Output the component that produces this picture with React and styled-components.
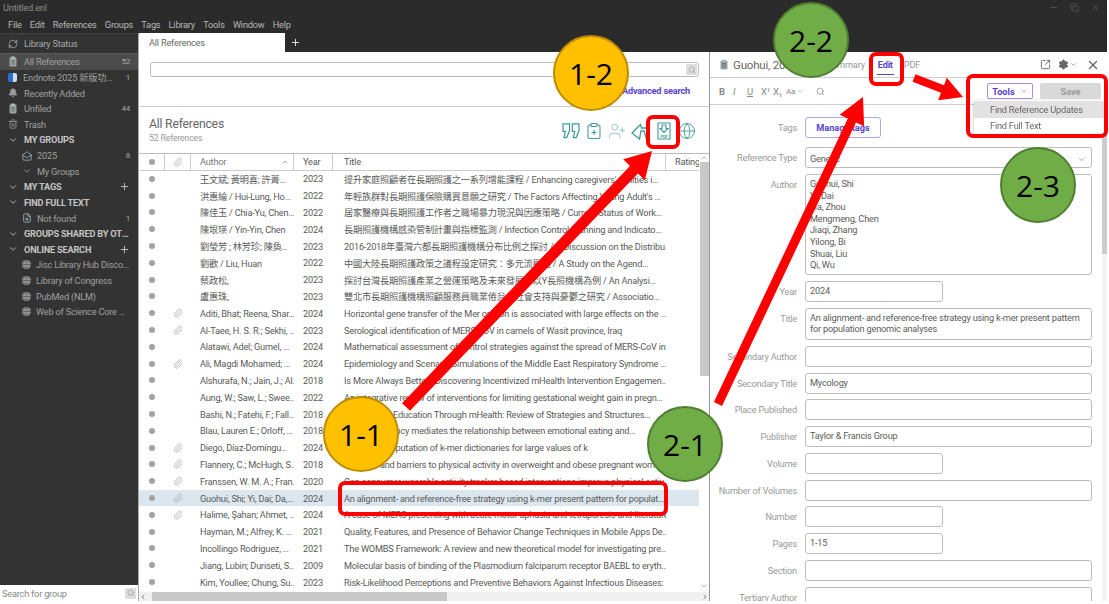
import React from 'react'
import styled, { createGlobalStyle } from 'styled-components'
import {
  Bell, ChevronDown, ChevronLeft, ChevronRight, ChevronUp, ClipboardPlus, Copy, FileSearch,
  Globe, MailOpen, Minus, Paperclip, Plus, RefreshCw, Search, Settings, SquareArrowOutUpRight,
  Trash2, UserPlus, X,
} from 'lucide-react'

const FONT = 'Roboto, "Noto Sans CJK TC", sans-serif'
const PURPLE = '#5a3fd0'
const TEAL = '#3f9a9c'

const GlobalStyle = createGlobalStyle`
  html, body { margin: 0; background: #fff; }
  body { font-family: ${FONT}; font-size: 9.2px; letter-spacing: -0.2px; color: #555; overflow: hidden; }
  * { box-sizing: border-box; }
`

const Page = styled.div`
  position: relative;
  width: 1109px;
  height: 604px;
  overflow: hidden;
`
const Window = styled.div`
  display: flex;
  flex-direction: column;
  width: 1107px;
  height: 601px;
  background: #2b2b2b;
  filter: blur(0.35px);
`
const TitleBar = styled.div`
  display: flex;
  align-items: center;
  justify-content: space-between;
  height: 15px;
  padding: 0 4px 0 3px;
  color: #8c8c8c;
`
const WindowControls = styled.div`
  display: flex;
  gap: 12px;
  padding-right: 3px;
  color: #5e5e5e;
`
const MenuBar = styled.div`
  display: flex;
  gap: 8.2px;
  height: 18px;
  padding: 1px 0 0 8px;
  align-items: center;
  color: #b8b8b8;
`
const Body = styled.div`
  display: flex;
  flex: 1;
  min-height: 0;
`

/* sidebar */
const SidebarBox = styled.aside`
  display: flex;
  flex-direction: column;
  width: 139px;
  background: #333;
  border-right: 1px solid #aaa;
  border-top: 1px solid #444;
`
const StatusRow = styled.div`
  display: flex;
  align-items: center;
  gap: 6px;
  height: 20px;
  padding-left: 8px;
  color: #a8a8a8;
  border-bottom: 1px solid #5a5a5a;
`
const SideRow = styled.div`
  display: flex;
  align-items: center;
  height: 15.625px;
  padding: 0 8px 0 ${p => (p.$indent ? 22 : 8)}px;
  gap: ${p => (p.$indent ? 5 : 6)}px;
  color: ${p => (p.$head ? '#c4c4c4' : '#a0a0a0')};
  font-weight: ${p => (p.$head ? 700 : 400)};
  background: ${p => (p.$active ? '#4c4c4c' : 'transparent')};
  white-space: nowrap;
`
const SideLabel = styled.span`
  flex: 1;
  min-width: 0;
  overflow: hidden;
  text-overflow: ellipsis;
`
const SideCount = styled.span`
  font-size: 8px;
  color: #a8a8a8;
`
const WordBadge = styled.span`
  display: inline-block;
  width: 9px;
  height: 9px;
  flex-shrink: 0;
  border-radius: 2px;
  background: linear-gradient(90deg, #2b6fd0 60%, #cfe0f5 60%);
`
const GlobeDot = styled.span`
  display: inline-flex;
  align-items: center;
  justify-content: center;
  width: 9px;
  height: 9px;
  flex-shrink: 0;
  border-radius: 50%;
  background: #a6a6a6;
  color: #555;
`
const SideSpacer = styled.div`
  flex: 1;
`
const GroupSearch = styled.div`
  display: flex;
  align-items: center;
  justify-content: space-between;
  height: 16px;
  padding: 0 2px 0 2px;
  background: #fff;
  color: #888;
`
const SearchButton = styled.span`
  display: inline-flex;
  align-items: center;
  justify-content: center;
  width: 11px;
  height: 11px;
  background: #ddd;
  color: #999;
  border-radius: 1px;
`

/* main */
const Main = styled.div`
  display: flex;
  flex-direction: column;
  flex: 1;
  min-width: 0;
`
const TabBar = styled.div`
  display: flex;
  align-items: stretch;
  height: 19px;
`
const Tab = styled.div`
  width: 146px;
  padding: 4px 0 0 10px;
  background: #fff;
  color: #666;
`
const AddTab = styled.div`
  display: flex;
  align-items: center;
  padding-left: 5px;
  color: #eee;
`
const Panes = styled.div`
  display: flex;
  flex: 1;
  min-height: 0;
  background: #fff;
`
const ListPane = styled.section`
  display: flex;
  flex-direction: column;
  width: 571px;
  border-right: 1.5px solid #999;
`
const SearchArea = styled.div`
  display: flex;
  flex-direction: column;
  height: 55px;
  padding: 10px 10px 0 11px;
  border-bottom: 1px solid #ccc;
`
const SearchInput = styled.div`
  display: flex;
  align-items: center;
  justify-content: flex-end;
  height: 15px;
  padding-right: 1px;
  border: 1px solid #bbb;
  border-radius: 3px;
`
const AdvancedLink = styled.a`
  align-self: flex-end;
  margin: 8px 9px 0 0;
  color: ${PURPLE};
  font-weight: 700;
`
const ListHead = styled.div`
  display: flex;
  justify-content: space-between;
  height: 46px;
  padding: 9px 13px 0 10px;
`
const ListTitle = styled.div`
  font-size: 12.2px;
  line-height: 16px;
  color: #666;
`
const ListCount = styled.div`
  margin-top: 1px;
  font-size: 8.8px;
  color: #999;
`
const ActionIcons = styled.div`
  display: flex;
  align-items: center;
  gap: 5px;
  height: 30px;
  color: ${TEAL};
`
const TableArea = styled.div`
  display: flex;
  flex: 1;
  min-height: 0;
  border-top: 1px solid #bbb;
`
const TableCol = styled.div`
  flex: 1;
  min-width: 0;
  overflow: hidden;
`
const Row = styled.div`
  display: grid;
  grid-template-columns: 26px 26px 103px 39px 333px 33px;
  align-items: center;
  height: ${p => (p.$head ? 16.5 : 16.8)}px;
  background: ${p => (p.$selected ? '#dce6ef' : 'transparent')};
  color: #5a5a5a;
  border-bottom: ${p => (p.$head ? '1px solid #ccc' : '0')};
  white-space: nowrap;
`
const Cell = styled.div`
  display: flex;
  align-items: center;
  justify-content: ${p => (p.$center ? 'center' : 'flex-start')};
  height: 100%;
  padding-left: ${p => (p.$center ? 0 : p.$pad || 9)}px;
  overflow: hidden;
  border-right: ${p => (p.$head ? '1px solid #ccc' : '0')};
`
const AuthorHead = styled(Cell)`
  justify-content: space-between;
  padding-right: 4px;
  color: #777;
`
const Dot = styled.span`
  width: 6px;
  height: 6px;
  border-radius: 50%;
  background: #a3a3a3;
`
const VScroll = styled.div`
  display: flex;
  flex-direction: column;
  align-items: center;
  justify-content: space-between;
  width: 10px;
  padding-bottom: 2px;
  color: #888;
`
const VThumb = styled.div`
  width: 9px;
  height: 214px;
  margin-bottom: auto;
  background: #c8c8c8;
`
const HScroll = styled.div`
  display: flex;
  align-items: center;
  height: 9px;
  background: #f0f0f0;
  color: #555;
`
const HThumb = styled.div`
  width: 295px;
  height: 9px;
  margin: 0 auto 0 5px;
  background: #c8c8c8;
`

/* detail */
const DetailPane = styled.section`
  display: flex;
  flex-direction: column;
  flex: 1;
  min-width: 0;
`
const DetailHead = styled.div`
  display: flex;
  align-items: center;
  height: 26px;
  padding-left: 9px;
  border-bottom: 1px solid #ccc;
`
const RefName = styled.div`
  width: 88px;
  margin-left: 4px;
  font-size: 11.5px;
  color: #666;
  white-space: nowrap;
`
const DetailTab = styled.div`
  position: relative;
  margin-left: ${p => p.$gap}px;
  color: ${p => (p.$active ? PURPLE : '#999')};
  font-weight: ${p => (p.$active ? 700 : 400)};
  &::after {
    content: '';
    display: ${p => (p.$active ? 'block' : 'none')};
    position: absolute;
    left: -1px;
    right: -1px;
    bottom: -5px;
    height: 1.5px;
    background: ${PURPLE};
  }
`
const HeadIcons = styled.div`
  display: flex;
  align-items: center;
  margin-left: auto;
  color: #666;
`
const EditBar = styled.div`
  position: relative;
  display: flex;
  align-items: center;
  height: 27px;
  padding: 0 6px 0 9px;
  border-bottom: 1px solid #ccc;
  color: #888;
`
const Format = styled.span`
  width: ${p => p.$w}px;
  font-weight: ${p => (p.$bold ? 700 : 400)};
  font-style: ${p => (p.$italic ? 'italic' : 'normal')};
  text-decoration: ${p => (p.$under ? 'underline' : 'none')};
  font-size: ${p => p.$size || 9.5}px;
`
const ToolsButton = styled.button`
  display: flex;
  align-items: center;
  justify-content: center;
  gap: 5px;
  width: 46px;
  height: 16px;
  margin-left: auto;
  padding: 0;
  border: 1px solid #a58fe0;
  border-radius: 2px;
  background: #fff;
  color: ${PURPLE};
  font: 700 9.2px ${FONT};
`
const SaveButton = styled.button`
  width: 61px;
  height: 16px;
  margin-left: 7px;
  padding: 0;
  border: 0;
  border-radius: 2px;
  background: #d9d9d9;
  color: #999;
  font: 700 9.2px ${FONT};
`
const ToolsMenu = styled.div`
  position: absolute;
  top: 22px;
  right: 3px;
  width: 130px;
  padding-top: 1px;
  background: #fff;
  box-shadow: 0 1px 3px rgba(0, 0, 0, 0.3);
  color: #666;
`
const MenuItem = styled.div`
  display: flex;
  align-items: center;
  height: 16.5px;
  padding-left: 16px;
  background: ${p => (p.$hover ? '#e2e2e2' : 'transparent')};
`
const FormArea = styled.div`
  display: flex;
  flex: 1;
  min-height: 0;
`
const FormFields = styled.div`
  display: flex;
  flex-direction: column;
  flex: 1;
  min-width: 0;
  gap: 5.75px;
  padding: 12px 10px 0 0;
  overflow: hidden;
`
const Field = styled.div`
  display: flex;
  flex-shrink: 0;
  gap: 8px;
  margin-bottom: ${p => p.$after || 0}px;
`
const FieldLabel = styled.div`
  flex-shrink: 0;
  width: 87px;
  line-height: 21px;
  text-align: right;
  color: #999;
  white-space: nowrap;
`
const FieldBox = styled.div`
  display: flex;
  align-items: ${p => (p.$select ? 'center' : 'flex-start')};
  justify-content: space-between;
  width: ${p => (p.$short ? 137.5 : 287)}px;
  height: ${p => p.$h || 21}px;
  padding: 3px 5px 0 4px;
  border: 1px solid #bdbdbd;
  border-radius: 3px;
  line-height: 11.6px;
  color: #5c5c5c;
  white-space: pre-line;
`
const TagsButton = styled.button`
  width: 76px;
  height: 21px;
  padding: 0;
  border: 1px solid #b7a6e8;
  border-radius: 3px;
  background: #fff;
  color: ${PURPLE};
  font: 700 9.2px ${FONT};
`
const FormScroll = styled.div`
  width: 5px;
  background: #f4f4f4;
`
const FormThumb = styled.div`
  width: 5px;
  height: 120px;
  margin-top: 29px;
  background: #ccc;
`

/* annotations drawn over the screenshot */
const Circle = styled.div`
  position: absolute;
  left: ${p => p.$x - 38}px;
  top: ${p => p.$y - 38}px;
  display: flex;
  align-items: center;
  justify-content: center;
  width: 76px;
  height: 76px;
  border-radius: 50%;
  border: 2.5px solid ${p => (p.$green ? '#507e32' : '#bc8c00')};
  background: ${p => (p.$green ? '#70ad47' : '#ffc000')};
  color: #000;
  font: 400 30px "Open Sans", sans-serif;
  letter-spacing: 0;
`
const Marker = styled.div`
  position: absolute;
  left: ${p => p.$x}px;
  top: ${p => p.$y}px;
  width: ${p => p.$w}px;
  height: ${p => p.$h}px;
  border: 4px solid #f00;
  border-radius: 7px;
`
const ArrowLayer = styled.svg`
  position: absolute;
  left: 0;
  top: 0;
`

function ClipIcon() {
  return (
    <svg width='10' height='11' viewBox='0 0 10 11' style={{ flexShrink: 0 }}>
      <rect x='1.5' y='1.5' width='7' height='9' rx='1' fill='#9aa5a5' />
      <rect x='3' y='0.5' width='4' height='2' rx='.5' fill='#b5bdbd' />
      <path d='M3 4.5h4M3 6.2h4M3 8h4' stroke='#555' strokeWidth='.6' />
    </svg>
  )
}

function QuoteIcon() {
  return (
    <svg width='18' height='16' viewBox='0 0 19 17' fill='none' stroke='currentColor' strokeWidth='1.3'>
      <path d='M1 1h7v7l-3 7.5H2L3.5 9H1z' />
      <path d='M11 1h7v7l-3 7.5h-3L13.500 9H11z' />
    </svg>
  )
}

function ShareIcon() {
  return (
    <svg width='19' height='18' viewBox='0 0 19 18' fill='none' stroke='currentColor' strokeWidth='1.3'>
      <path d='M1 11L9.500 2.500 10.500 6H17.500L15 15.500 13 9H10L8.500 17z' />
    </svg>
  )
}

function PdfIcon() {
  return (
    <svg width='14' height='18' viewBox='0 0 14 18' fill='none' stroke='currentColor' strokeWidth='1.1' style={{ margin: '0 2px' }}>
      <path d='M1 1h12v16H1z' />
      <path d='M5 3h4v3.500h2L7 10.500 3 6.500h2z' />
      <text x='7' y='15.500' textAnchor='middle' fontSize='4' fontWeight='700' fill='currentColor' stroke='none'>PDF</text>
    </svg>
  )
}

const sideTop = [
  { label: 'All References', count: 52, icon: <ClipIcon />, active: true },
  { label: 'Endnote 2025 新版功能介紹', count: 1, icon: <WordBadge /> },
  { label: 'Recently Added', icon: <Bell size={10} fill='#999' color='#999' /> },
  { label: 'Unfiled', count: 44, icon: <ClipIcon /> },
  { label: 'Trash', icon: <Trash2 size={10} color='#999' /> },
]
const onlineSearch = ['Jisc Library Hub Discover', 'Library of Congress', 'PubMed (NLM)', 'Web of Science Core Collection']

const refs = [
  ['王文斌; 黃明喜; 許菁…', 2023, '提升家庭照顧者在長期照護之一系列增能課程 / Enhancing caregivers\' abilities i…'],
  ['洪惠綸 / Hui-Lung, Ho…', 2022, '年輕族群對長期照護保險購買意願之研究 / The Factors Affecting Young Adult\'s …'],
  ['陳佳玉 / Chia-Yu, Chen…', 2022, '居家醫療與長期照護工作者之職場暴力現況與因應策略 / Current Status of Work…'],
  ['陳垠瑛 / Yin-Yin, Chen', 2024, '長期照護機構感染管制計畫與指標監測 / Infection Control Planning and Indicato…'],
  ['劉瑩芳 ; 林芳珍; 陳奐…', 2023, '2016-2018年臺灣六都長期照護機構分布比例之探討 / A Discussion on the Distribu…'],
  ['劉歡 / Liu, Huan', 2022, '中國大陸長期照護政策之議程設定研究：多元流觀點 / A Study on the Agend…'],
  ['蔡政松,', 2023, '探討台灣長期照護產業之營運策略及未來發展：以Y長照機構為例 / An Analysi…'],
  ['盧惠珠,', 2023, '雙北市長期照護機構照顧服務員職業倦怠、社會支持與憂鬱之研究 / Associatio…'],
  ['Aditi, Bhat; Reena, Shar…', 2024, 'Horizontal gene transfer of the Mer operon is associated with large effects on the …', true],
  ['Al-Taee, H. S. R.; Sekhi, …', 2023, 'Serological identification of MERS-CoV in camels of Wasit province, Iraq', true],
  ['Alatawi, Adel; Gumel, …', 2024, 'Mathematical assessment of control strategies against the spread of MERS-CoV in …'],
  ['Ali, Magdi Mohamed; …', 2024, 'Epidemiology and Scenario Simulations of the Middle East Respiratory Syndrome …', true],
  ['Alshurafa, N.; Jain, J.; Al…', 2018, 'Is More Always Better? Discovering Incentivized mHealth Intervention Engagemen…'],
  ['Aung, W.; Saw, L.; Swee…', 2022, 'An integrative review of interventions for limiting gestational weight gain in pregn…'],
  ['Bashi, N.; Fatehi, F.; Fall…', 2018, 'Supplement Education Through mHealth: Review of Strategies and Structures…'],
  ['Blau, Lauren E.; Orloff, …', 2018, 'Eating frequency mediates the relationship between emotional eating and…'],
  ['Diego, Díaz-Domíngu…', 2024, 'Efficient computation of k-mer dictionaries for large values of k', true],
  ['Flannery, C.; McHugh, S…', 2018, 'Enablers and barriers to physical activity in overweight and obese pregnant wom…', true],
  ['Franssen, W. M. A.; Fran…', 2020, 'Can consumer wearable activity tracker-based interventions improve physical activ…', true],
  ['Guohui, Shi; Yi, Dai; Da,…', 2024, 'An alignment- and reference-free strategy using k-mer present pattern for populat…', true, true],
  ['Halime, Şahan; Ahmet, …', 2024, 'A case of MERS presenting with acute motor aphasia and tetraparesis and literature…', true],
  ['Hayman, M.; Alfrey, K. …', 2021, 'Quality, Features, and Presence of Behavior Change Techniques in Mobile Apps De…'],
  ['Incollingo Rodriguez, …', 2021, 'The WOMBS Framework: A review and new theoretical model for investigating pre…'],
  ['Jiang, Lubin; Duriseti, S…', 2009, 'Molecular basis of binding of the Plasmodium falciparum receptor BAEBL to eryth…'],
  ['Kim, Youllee; Chung, Su…', 2023, 'Risk-Likelihood Perceptions and Preventive Behaviors Against Infectious Diseases: …'],
]

const fields = [
  { label: 'Author', value: 'Guohui, Shi\nYi, Dai\nJia, Zhou\nMengmeng, Chen\nJiaqi, Zhang\nYilong, Bi\nShuai, Liu\nQi, Wu', h: 101.25 },
  { label: 'Year', value: '2024', short: true },
  { label: 'Title', value: 'An alignment- and reference-free strategy using k-mer present pattern for population genomic analyses', h: 32.25 },
  { label: 'Secondary Author' },
  { label: 'Secondary Title', value: 'Mycology' },
  { label: 'Place Published' },
  { label: 'Publisher', value: 'Taylor & Francis Group' },
  { label: 'Volume', short: true },
  { label: 'Number of Volumes' },
  { label: 'Number', short: true },
  { label: 'Pages', value: '1-15', short: true },
  { label: 'Section' },
  { label: 'Tertiary Author' },
]

// block arrow polygon from start to tip, the way PowerPoint draws it
const arrowPoints = ({ x1, y1, x2, y2, w, headW, headL }) => {
  const len = Math.hypot(x2 - x1, y2 - y1)
  const ux = (x2 - x1) / len
  const uy = (y2 - y1) / len
  const at = (along, side) => `${x1 + ux * along - uy * side},${y1 + uy * along + ux * side}`
  const neck = len - headL
  return [
    at(0, w / 2), at(neck, w / 2), at(neck, headW / 2), at(len, 0),
    at(neck, -headW / 2), at(neck, -w / 2), at(0, -w / 2),
  ].join(' ')
}

const arrows = [
  { x1: 406, y1: 407, x2: 652, y2: 151, w: 11, headW: 30, headL: 26 },
  { x1: 718, y1: 404, x2: 863, y2: 97, w: 9, headW: 27, headL: 26 },
  { x1: 914, y1: 78, x2: 963, y2: 97, w: 8, headW: 24, headL: 22 },
]

const circles = [
  { x: 361, y: 434, text: '1-1' },
  { x: 591, y: 73, text: '1-2' },
  { x: 685, y: 444, text: '2-1', green: true },
  { x: 811, y: 40, text: '2-2', green: true },
  { x: 1038, y: 185, text: '2-3', green: true },
]

const markers = [
  { x: 646, y: 115, w: 34, h: 34 },
  { x: 869, y: 52, w: 35, h: 34 },
  { x: 966, y: 74, w: 142, h: 64 },
  { x: 338, y: 481, w: 330, h: 35 },
]

const Sidebar = () => (
  <SidebarBox>
    <StatusRow><RefreshCw size={10} />Library Status</StatusRow>
    {sideTop.map(item => (
      <SideRow key={item.label} $active={item.active}>
        {item.icon}
        <SideLabel>{item.label}</SideLabel>
        {item.count && <SideCount>{item.count}</SideCount>}
      </SideRow>
    ))}
    <SideRow $head><ChevronDown size={10} />MY GROUPS</SideRow>
    <SideRow $indent>
      <MailOpen size={10} color='#9fb0c0' />
      <SideLabel>2025</SideLabel>
      <SideCount>8</SideCount>
    </SideRow>
    <SideRow $indent><ChevronDown size={10} />My Groups</SideRow>
    <SideRow $head><ChevronDown size={10} /><SideLabel>MY TAGS</SideLabel><Plus size={11} /></SideRow>
    <SideRow $head><ChevronDown size={10} />FIND FULL TEXT</SideRow>
    <SideRow $indent>
      <FileSearch size={10} color='#9fb0c0' />
      <SideLabel>Not found</SideLabel>
      <SideCount>1</SideCount>
    </SideRow>
    <SideRow $head><ChevronDown size={10} /><SideLabel>GROUPS SHARED BY OTHERS</SideLabel></SideRow>
    <SideRow $head><ChevronDown size={10} /><SideLabel>ONLINE SEARCH</SideLabel><Plus size={11} /></SideRow>
    {onlineSearch.map(name => (
      <SideRow $indent key={name}>
        <GlobeDot><Globe size={9} /></GlobeDot>
        <SideLabel>{name}</SideLabel>
      </SideRow>
    ))}
    <SideSpacer />
    <GroupSearch>
      Search for group
      <SearchButton><Search size={8} /></SearchButton>
    </GroupSearch>
  </SidebarBox>
)

const RefList = () => (
  <ListPane>
    <SearchArea>
      <SearchInput><SearchButton><Search size={8} /></SearchButton></SearchInput>
      <AdvancedLink>Advanced search</AdvancedLink>
    </SearchArea>
    <ListHead>
      <div>
        <ListTitle>All References</ListTitle>
        <ListCount>52 References</ListCount>
      </div>
      <ActionIcons>
        <QuoteIcon />
        <ClipboardPlus size={18} strokeWidth={1.4} />
        <UserPlus size={18} strokeWidth={1.2} color='#8cc4c6' />
        <ShareIcon />
        <PdfIcon />
        <Globe size={18} strokeWidth={1.2} />
      </ActionIcons>
    </ListHead>
    <TableArea>
      <TableCol>
        <Row $head>
          <Cell $head $center><Dot /></Cell>
          <Cell $head $center><Paperclip size={10} color='#bbb' /></Cell>
          <AuthorHead $head>Author<ChevronUp size={8} /></AuthorHead>
          <Cell $head>Year</Cell>
          <Cell $head $pad={11}>Title</Cell>
          <Cell>Rating</Cell>
        </Row>
        {refs.map(([author, year, title, clip, selected]) => (
          <Row key={author} $selected={selected}>
            <Cell $center><Dot /></Cell>
            <Cell $center>{clip && <Paperclip size={10} color='#b5b5b5' />}</Cell>
            <Cell>{author}</Cell>
            <Cell>{year}</Cell>
            <Cell $pad={11}>{title}</Cell>
          </Row>
        ))}
      </TableCol>
      <VScroll>
        <ChevronUp size={8} />
        <VThumb />
        <ChevronDown size={8} />
      </VScroll>
    </TableArea>
    <HScroll>
      <ChevronLeft size={8} />
      <HThumb />
      <ChevronRight size={8} />
    </HScroll>
  </ListPane>
)

const Detail = () => (
  <DetailPane>
    <DetailHead>
      <ClipIcon />
      <RefName>Guohui, 2024</RefName>
      <DetailTab $gap={6}>Summary</DetailTab>
      <DetailTab $gap={13} $active>Edit</DetailTab>
      <DetailTab $gap={11}>PDF</DetailTab>
      <HeadIcons>
        <SquareArrowOutUpRight size={11} />
        <Settings size={11} style={{ marginLeft: 7 }} fill='#666' />
        <ChevronDown size={7} style={{ marginLeft: 1 }} />
        <X size={14} strokeWidth={2.4} style={{ margin: '0 7px 0 9px' }} />
      </HeadIcons>
    </DetailHead>
    <EditBar>
      <Format $w={14} $bold>B</Format>
      <Format $w={14} $italic>I</Format>
      <Format $w={14} $under>U</Format>
      <Format $w={12}>X¹</Format>
      <Format $w={13}>X₁</Format>
      <Format $w={11} $size={8}>Aa</Format>
      <ChevronDown size={7} />
      <Search size={9} style={{ marginLeft: 12 }} />
      <ToolsButton>Tools<ChevronDown size={8} color='#888' /></ToolsButton>
      <SaveButton>Save</SaveButton>
      <ToolsMenu>
        <MenuItem $hover>Find Reference Updates</MenuItem>
        <MenuItem>Find Full Text</MenuItem>
      </ToolsMenu>
    </EditBar>
    <FormArea>
      <FormFields>
        <Field $after={3.5}>
          <FieldLabel>Tags</FieldLabel>
          <TagsButton>Manage tags</TagsButton>
        </Field>
        <Field>
          <FieldLabel>Reference Type</FieldLabel>
          <FieldBox $select>Generic<ChevronDown size={9} color='#888' /></FieldBox>
        </Field>
        {fields.map(f => (
          <Field key={f.label}>
            <FieldLabel>{f.label}</FieldLabel>
            <FieldBox $short={f.short} $h={f.h}>{f.value}</FieldBox>
          </Field>
        ))}
      </FormFields>
      <FormScroll><FormThumb /></FormScroll>
    </FormArea>
  </DetailPane>
)

export default function App() {
  return (
    <Page>
      <GlobalStyle />
      <Window>
        <TitleBar>
          Untitled.enl
          <WindowControls>
            <Minus size={9} />
            <Copy size={9} />
            <X size={9} />
          </WindowControls>
        </TitleBar>
        <MenuBar>
          {['File', 'Edit', 'References', 'Groups', 'Tags', 'Library', 'Tools', 'Window', 'Help'].map(m => (
            <span key={m}>{m}</span>
          ))}
        </MenuBar>
        <Body>
          <Sidebar />
          <Main>
            <TabBar>
              <Tab>All References</Tab>
              <AddTab><Plus size={11} /></AddTab>
            </TabBar>
            <Panes>
              <RefList />
              <Detail />
            </Panes>
          </Main>
        </Body>
      </Window>
      <ArrowLayer width='1109' height='604'>
        {arrows.map(a => <polygon key={a.x1} points={arrowPoints(a)} fill='#f00' />)}
      </ArrowLayer>
      {markers.map(m => <Marker key={m.x} $x={m.x} $y={m.y} $w={m.w} $h={m.h} />)}
      {circles.map(c => <Circle key={c.text} $x={c.x} $y={c.y} $green={c.green}>{c.text}</Circle>)}
    </Page>
  )
}
